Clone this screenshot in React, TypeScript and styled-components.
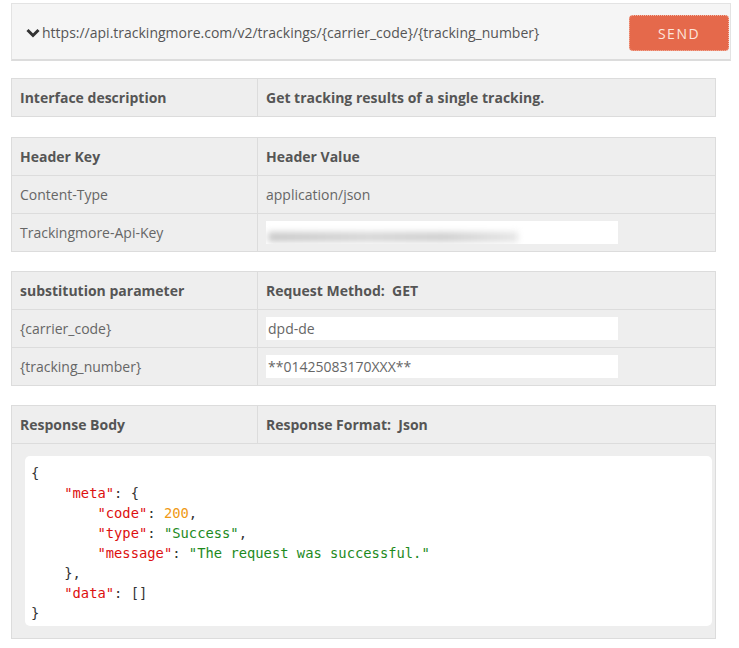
import React from 'react';
import styled, { createGlobalStyle } from 'styled-components';

const GlobalStyle = createGlobalStyle`
    body {
        margin: 0;
        background: #fff;
        font-family: "Open Sans", "Liberation Sans", sans-serif;
        font-size: 14px;
        color: #666;
    }
`;

const Page = styled.div`
    padding: 3px 0 8px 11px;
    width: 720px;
`;

const UrlBar = styled.div`
    height: 58px;
    box-sizing: border-box;
    background: #f5f5f5;
    border: 1px solid #e3e3e3;
    border-bottom: 2px solid #dcdcdc;
    display: flex;
    align-items: center;
    padding: 0 1px 0 14px;
`;

const Url = styled.div`
    flex: 1;
    display: flex;
    align-items: center;
    gap: 2px;
    color: #555;
    font-size: 14px;
    padding-top: 2px;
`;

const SendButton = styled.button`
    width: 100px;
    height: 36px;
    margin-top: 3px;
    background: #e5694b;
    border: 1px dotted #f3b8a6;
    border-radius: 4px;
    color: #fde5dc;
    font-family: "Open Sans", "Liberation Sans", sans-serif;
    font-size: 14px;
    letter-spacing: 1.5px;
    cursor: pointer;
`;

const Table = styled.div<{ $top: number }>`
    width: 705px;
    margin-top: ${(p) => p.$top}px;
    border: 1px solid #dcdcdc;
    background: #eee;
    box-sizing: border-box;
`;

const Row = styled.div`
    display: grid;
    grid-template-columns: 245px 1fr;
    height: 37px;
    border-top: 1px solid #dcdcdc;
    &:first-child {
        border-top: none;
    }
`;

const Cell = styled.div<{ $head?: boolean }>`
    display: flex;
    align-items: center;
    padding: 0 8px;
    font-weight: ${(p) => (p.$head ? 700 : 400)};
    color: ${(p) => (p.$head ? '#555' : '#666')};
    & + & {
        border-left: 1px solid #dcdcdc;
    }
`;

const Field = styled.div`
    width: 352px;
    height: 23px;
    background: #fff;
    display: flex;
    align-items: center;
    padding-left: 2px;
    box-sizing: border-box;
    color: #666;
    overflow: hidden;
`;

// the API key is blurred out in the screenshot
const Blur = styled.div`
    width: 250px;
    height: 10px;
    margin-top: 8px;
    background: linear-gradient(90deg, #c9c9c9, #d6d6d6 40%, #cfcfcf 70%, #e6e6e6);
    filter: blur(3px);
`;

const BodyRow = styled.div`
    border-top: 1px solid #dcdcdc;
    padding: 12px 3px 12px 13px;
`;

const Code = styled.pre`
    margin: 0;
    background: #fff;
    border-radius: 5px;
    padding: 7px 6px 3px 6px;
    font-family: "DejaVu Sans Mono", "Liberation Mono", monospace;
    font-size: 13.8px;
    line-height: 20px;
    color: #333;
`;

const Key = styled.span`
    color: #dd1010;
`;
const Str = styled.span`
    color: #1d8a1d;
`;
const Num = styled.span`
    color: #f09a15;
`;

const Chevron = () => (
    <svg width="14" height="10" viewBox="0 0 14 10">
        <path d="M1.5 2 L7 7.5 L12.5 2" stroke="#333" strokeWidth="3" fill="none" />
    </svg>
);

const App: React.FC = () => {
    return (
        <Page>
            <GlobalStyle />
            <UrlBar>
                <Url>
                    <Chevron />
                    <span>https://api.trackingmore.com/v2/trackings/{'{carrier_code}'}/{'{tracking_number}'}</span>
                </Url>
                <SendButton>SEND</SendButton>
            </UrlBar>

            <Table $top={17}>
                <Row>
                    <Cell $head>Interface description</Cell>
                    <Cell $head>Get tracking results of a single tracking.</Cell>
                </Row>
            </Table>

            <Table $top={20}>
                <Row>
                    <Cell $head>Header Key</Cell>
                    <Cell $head>Header Value</Cell>
                </Row>
                <Row>
                    <Cell>Content-Type</Cell>
                    <Cell>application/json</Cell>
                </Row>
                <Row>
                    <Cell>Trackingmore-Api-Key</Cell>
                    <Cell>
                        <Field><Blur /></Field>
                    </Cell>
                </Row>
            </Table>

            <Table $top={19}>
                <Row>
                    <Cell $head>substitution parameter</Cell>
                    <Cell $head>Request Method:&nbsp;&nbsp;GET</Cell>
                </Row>
                <Row>
                    <Cell>{'{carrier_code}'}</Cell>
                    <Cell><Field>dpd-de</Field></Cell>
                </Row>
                <Row>
                    <Cell>{'{tracking_number}'}</Cell>
                    <Cell><Field>**01425083170XXX**</Field></Cell>
                </Row>
            </Table>

            <Table $top={19}>
                <Row>
                    <Cell $head>Response Body</Cell>
                    <Cell $head>Response Format:&nbsp;&nbsp;Json</Cell>
                </Row>
                <BodyRow>
                    <Code>
{'{\n'}
{'    '}<Key>"meta"</Key>{': {\n'}
{'        '}<Key>"code"</Key>{': '}<Num>200</Num>{',\n'}
{'        '}<Key>"type"</Key>{': '}<Str>"Success"</Str>{',\n'}
{'        '}<Key>"message"</Key>{': '}<Str>"The request was successful."</Str>{'\n'}
{'    },\n'}
{'    '}<Key>"data"</Key>{': []\n'}
{'}'}
                    </Code>
                </BodyRow>
            </Table>
        </Page>
    );
};

export default App;
